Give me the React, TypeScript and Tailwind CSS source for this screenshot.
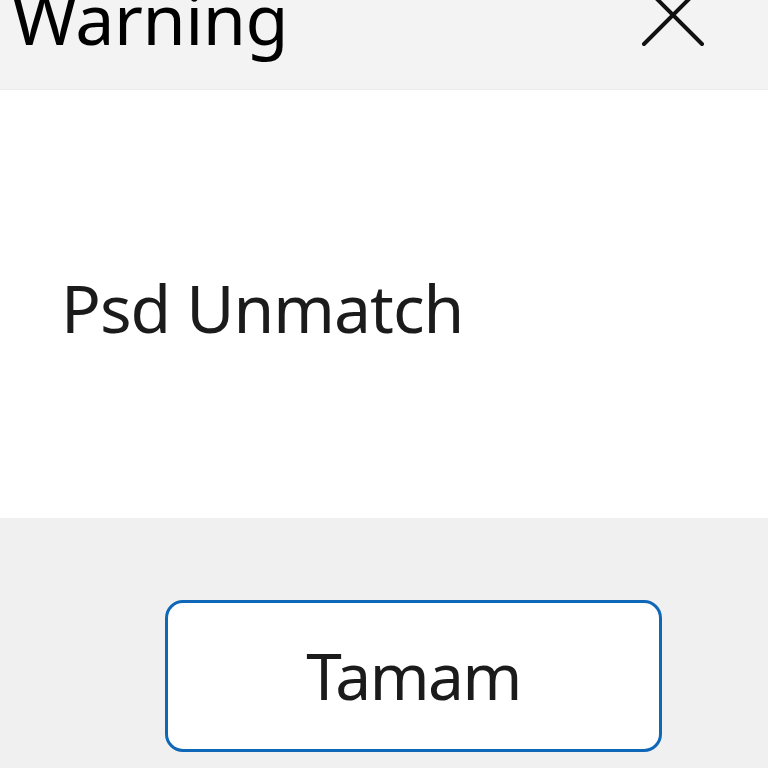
export default function App() {
  return (
    <div
      className="w-[768px] h-[768px] flex flex-col bg-[#f0f0f0] overflow-hidden text-[#1b1b1b]"
      style={{ fontFamily: '"Noto Sans", "Open Sans", sans-serif' }}
    >
      {/* title bar */}
      <div className="h-[90px] shrink-0 bg-[#f3f3f3] flex justify-between items-start overflow-hidden border-b border-[#ebebeb]">
        <div className="pl-[12px] -mt-[27px] text-[70px] leading-[90px] tracking-[-0.5px] text-black">Warning</div>
        <svg className="mr-[62px] -mt-[18px] shrink-0" width="66" height="66" viewBox="0 0 66 66">
          <path d="M4 4 L62 62 M62 4 L4 62" stroke="#111" strokeWidth="4" strokeLinecap="round" />
        </svg>
      </div>

      {/* message body */}
      <div className="h-[428px] shrink-0 bg-white flex items-center pl-[61px] pt-[6px]">
        <span className="text-[66px] leading-none tracking-[-1px]">Psd Unmatch</span>
      </div>

      {/* footer */}
      <div className="flex-1 flex items-start pt-[82px] pl-[165px]">
        <button className="w-[497px] h-[152px] rounded-[18px] border-[3px] border-[#0f67b8] bg-white flex items-center justify-center text-[64px] leading-none tracking-[-1.5px] text-[#1b1b1b]">
          Tamam
        </button>
      </div>
    </div>
  );
}
